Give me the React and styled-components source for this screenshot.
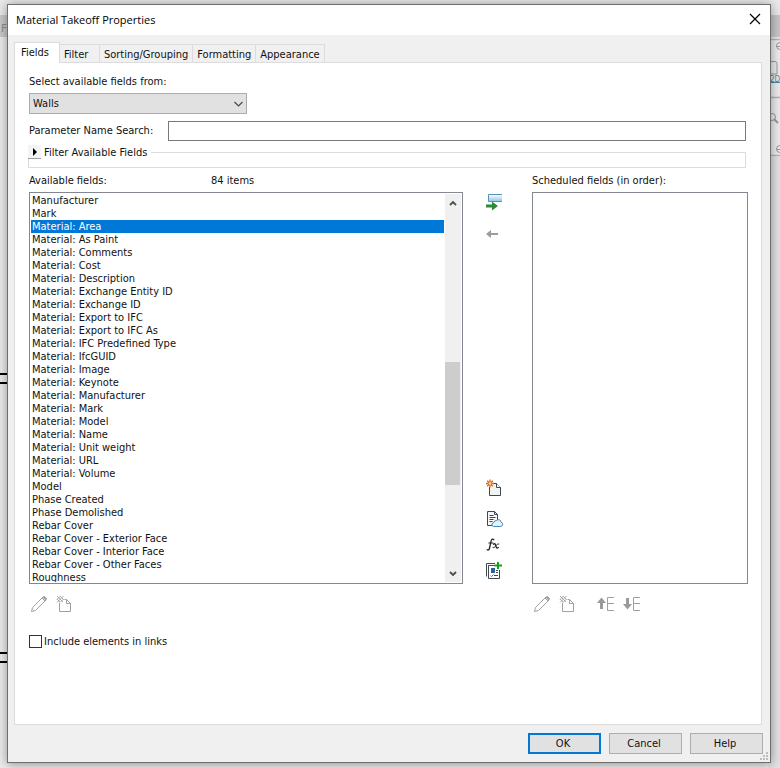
import React, { useState } from "react";
import styled, { createGlobalStyle } from "styled-components";

const GlobalStyle = createGlobalStyle`
  *, *::before, *::after { box-sizing: border-box; }
  body { margin: 0; background: #ececec; }
  body, button, input, select {
    font-family: "DejaVu Sans Condensed", Tahoma, "DejaVu Sans", sans-serif;
    font-size: 11px;
    line-height: 13px;
    color: #111;
  }
  button { padding: 0; border: 0; background: none; }
`;

const Page = styled.main`
  position: relative;
  display: flex;
  height: 100vh;
  min-height: 560px;
  padding: 4px 9px 5px 7px;
  overflow: hidden;
`;

const Backdrop = styled.svg`
  position: absolute;
  top: 0;
  height: 100%;
  ${(p) => (p.$side === "left" ? "left: 0; width: 8px;" : "right: 0; width: 12px;")}
`;

const TopShade = styled.div`
  position: absolute;
  inset: 0 0 auto 0;
  height: 15px;
  background: #e9e9e9;
`;

const Dialog = styled.section`
  position: relative;
  flex: 1;
  min-width: 0;
  display: flex;
  flex-direction: column;
  border: 1px solid #6e6e6e;
  background: #f0f0f0;
  box-shadow: 0 1px 10px rgba(0, 0, 0, 0.4);
`;

const TitleBar = styled.header`
  display: flex;
  align-items: center;
  justify-content: space-between;
  height: 30px;
  flex: none;
  padding: 0 9px 0 8px;
  background: #fff;
`;

const Title = styled.h1`
  margin: 0;
  font: 400 11px/16px "Open Sans", "Noto Sans", sans-serif;
  color: #000;
`;

const CloseButton = styled.button`
  display: grid;
  place-items: center;
  width: 12px;
  height: 22px;
  align-self: flex-start;
  padding-top: 5px;
`;

const TabStrip = styled.div`
  display: flex;
  align-items: flex-end;
  flex: none;
  padding: 7px 6px 0;
`;

const Tab = styled.button`
  position: relative;
  height: ${(p) => (p.$active ? 21 : 18)}px;
  margin-bottom: ${(p) => (p.$active ? -1 : 0)}px;
  padding: ${(p) => (p.$active ? "0 10px 1px 6px" : "1px 4px 0 4px")};
  min-width: 40px;
  text-align: left;
  border: 1px solid #dcdcdc;
  border-bottom: 0;
  border-left-width: ${(p) => (p.$active ? 1 : 0)}px;
  background: ${(p) => (p.$active ? "#fff" : "#f0f0f0")};
  z-index: ${(p) => (p.$active ? 1 : 0)};
`;

const Panel = styled.div`
  flex: 1;
  min-height: 0;
  display: flex;
  flex-direction: column;
  margin: 0 8px 0 6px;
  padding: 12px 13px 76px 14px;
  border: 1px solid #dcdcdc;
  background: #fff;
`;

const FieldLabel = styled.label`
  line-height: 14px;
`;

const SelectWrap = styled.div`
  display: grid;
  grid-template-columns: minmax(0, 218px);
  align-items: center;
  margin-top: 4px;

  select, svg { grid-area: 1 / 1; }
  svg { justify-self: end; margin-right: 4px; pointer-events: none; }
`;

const Select = styled.select`
  appearance: none;
  width: 100%;
  height: 21px;
  padding: 0 20px 0 3px;
  border: 1px solid #adadad;
  border-radius: 0;
  background: #e1e1e1;
`;

const SearchRow = styled.div`
  display: grid;
  grid-template-columns: 139px 1fr;
  align-items: center;
  margin: 7px 2px 0 0;
`;

const SearchInput = styled.input`
  width: 100%;
  height: 20px;
  padding: 0 3px;
  border: 1px solid #7a7a7a;
  background: #fff;
`;

const FilterGroup = styled.fieldset`
  flex: none;
  min-width: 0;
  height: 23px;
  margin: 4px 2px 0 -1px;
  padding: 0;
  border: 1px solid #dcdcdc;
`;

const FilterLegend = styled.legend`
  display: flex;
  margin-left: -1px;
  padding: 0 4px 0 0;
  background: #fff;
`;

const Expander = styled.button`
  display: flex;
  align-items: center;
  height: 14px;
  white-space: nowrap;
`;

const ExpanderArrow = styled.span`
  display: grid;
  place-items: center;
  width: 13px;
  height: 14px;
  margin-right: 3px;
  background: #f4f4f4;
  border-bottom: 1px solid #a0a0a0;
`;

const Columns = styled.div`
  flex: 1;
  min-height: 0;
  display: grid;
  grid-template-columns: 434fr 69px 216fr;
  grid-template-rows: 18px minmax(0, 1fr) auto;
  margin-top: 6px;
`;

const ListHeading = styled.div`
  grid-row: 1;
  grid-column: ${(p) => p.$column};
  display: grid;
  grid-template-columns: 182px auto;
  justify-content: start;
  line-height: 14px;
  white-space: nowrap;
`;

const ListFrame = styled.div`
  grid-row: 2;
  grid-column: ${(p) => p.$column};
  display: flex;
  min-width: 0;
  padding: 1px;
  border: 1px solid #828790;
  background: #fff;
`;

const Options = styled.ul`
  flex: 1;
  min-width: 0;
  margin: 0 1px 0 0;
  padding: 0;
  overflow: hidden;
  list-style: none;
`;

const Option = styled.li`
  height: 13px;
  padding-left: 1px;
  line-height: 14px;
  white-space: nowrap;
  cursor: default;
  color: ${(p) => (p.$selected ? "#fff" : "#111")};
  background: ${(p) => (p.$selected ? "#0078d7" : "transparent")};
`;

const ScrollTrack = styled.div`
  display: grid;
  grid-template-rows: 17px 151fr 122fr 80fr 17px;
  width: 16px;
  background: #f0f0f0;
`;

const ScrollButton = styled.button`
  display: grid;
  place-items: center;
`;

const ScrollThumb = styled.div`
  grid-row: 3;
  width: 15px;
  background: #cdcdcd;
`;

const ScrollEnd = styled(ScrollButton)`
  grid-row: 5;
`;

const Transfer = styled.div`
  grid-row: 2;
  grid-column: 2;
  display: flex;
  flex-direction: column;
  justify-content: space-between;
  padding: 0 0 3px 21px;
`;

const IconStack = styled.div`
  display: flex;
  flex-direction: column;
  gap: ${(p) => p.$gap}px;
`;

const IconButton = styled.button`
  display: grid;
  place-items: center;
  width: 20px;
  height: 20px;

  svg { display: block; }
`;

const ListTools = styled.div`
  grid-row: 3;
  grid-column: ${(p) => p.$column};
  display: flex;
  gap: 6px;
  padding-top: 10px;
`;

const ToolGap = styled.span`
  width: 6px;
`;

const CheckLabel = styled.label`
  display: flex;
  align-items: center;
  align-self: flex-start;
  gap: 2px;
  margin-top: 21px;
`;

const CheckBox = styled.input`
  appearance: none;
  width: 13px;
  height: 13px;
  margin: 0;
  border: 1px solid #333;
  background: #fff;

  &:checked { box-shadow: inset 0 0 0 2px #fff; background: #333; }
`;

const Footer = styled.footer`
  display: flex;
  justify-content: flex-end;
  gap: 8px;
  flex: none;
  padding: 8px 7px 8px;
`;

const PushButton = styled.button`
  width: 73px;
  height: 21px;
  padding-right: 3px;
  border: ${(p) => (p.$primary ? "2px solid #0078d7" : "1px solid #adadad")};
  background: #e1e1e1;
`;

const Grip = styled.svg`
  position: absolute;
  right: 1px;
  bottom: 1px;
`;

const TABS = ["Fields", "Filter", "Sorting/Grouping", "Formatting", "Appearance"];

const FIELDS = [
  "Manufacturer",
  "Mark",
  "Material: Area",
  "Material: As Paint",
  "Material: Comments",
  "Material: Cost",
  "Material: Description",
  "Material: Exchange Entity ID",
  "Material: Exchange ID",
  "Material: Export to IFC",
  "Material: Export to IFC As",
  "Material: IFC Predefined Type",
  "Material: IfcGUID",
  "Material: Image",
  "Material: Keynote",
  "Material: Manufacturer",
  "Material: Mark",
  "Material: Model",
  "Material: Name",
  "Material: Unit weight",
  "Material: URL",
  "Material: Volume",
  "Model",
  "Phase Created",
  "Phase Demolished",
  "Rebar Cover",
  "Rebar Cover - Exterior Face",
  "Rebar Cover - Interior Face",
  "Rebar Cover - Other Faces",
  "Roughness",
];

const CloseIcon = () => (
  <svg width="12" height="12" viewBox="0 0 12 12" fill="none" stroke="#000" strokeWidth="1.2">
    <path d="M1 1l10 10M11 1L1 11" />
  </svg>
);

const Chevron = () => (
  <svg width="9" height="6" viewBox="0 0 9 6" fill="none" stroke="#444" strokeWidth="1.1">
    <path d="M.5 1l4 4 4-4" />
  </svg>
);

const ScrollArrow = ({ down }) => (
  <svg width="8" height="6" viewBox="0 0 8 6" fill="none" stroke="#505050" strokeWidth="1.9">
    <path d={down ? "M1 1l3 3 3-3" : "M1 5l3-3 3 3"} />
  </svg>
);

const AddFieldIcon = () => (
  <svg width="18" height="18" viewBox="0 0 18 18">
    <defs>
      <linearGradient id="row" x1="0" y1="0" x2="0" y2="1">
        <stop offset="0" stopColor="#fff" />
        <stop offset="1" stopColor="#8fc6e6" />
      </linearGradient>
    </defs>
    <path d="M3.5 1.5H17v7H3.5z" fill="url(#row)" />
    <path d="M17 1.5H3.5v7H17" fill="none" stroke="#5a8fbd" />
    <path d="M1 11.500h6V8.500l6 4.500-6 4.500V14.500H1z" fill="#2c8a3b" />
  </svg>
);

const RemoveFieldIcon = () => (
  <svg width="18" height="18" viewBox="0 0 18 18">
    <path d="M1 9l5-4v3h7v2H6v3z" fill="#9c9c9c" />
  </svg>
);

const NewParameterIcon = () => (
  <svg width="18" height="18" viewBox="0 0 18 18">
    <path d="M4.500 4.500h7l4 4v8h-11z" fill="#f1f4f0" stroke="#3e4854" />
    <path d="M11.500 4.500v4h4" fill="#fff" stroke="#3e4854" />
    <circle cx="5" cy="4.500" r="3.500" fill="#fff" />
    <path d="M5 .5v8M1 4.500h8M2.200 1.700l5.600 5.600M7.800 1.700L2.200 7.300" stroke="#d9641e" strokeWidth="1.300" />
    <circle cx="5" cy="4.500" r="1.400" fill="#ffd36b" />
  </svg>
);

const CloudParameterIcon = () => (
  <svg width="20" height="20" viewBox="0 0 20 20">
    <path d="M3.500 2.500h7l3 3v11h-10z" fill="#f6f7f8" stroke="#3e4854" />
    <path d="M10.500 2.500v3h3M5.500 6.500h4M5.500 8.500h6M5.500 10.500h4M5.500 12.500h3" fill="none" stroke="#3e4854" />
    <path
      d="M9.500 17.500h7a2.200 2.200 0 0 0 .6-4.300 2.700 2.700 0 0 0-4.800-1.500 2.200 2.200 0 0 0-2.500 1.700 2.100 2.100 0 0 0-.3 4.100z"
      fill="#e2f1fb"
      stroke="#4387b8"
    />
  </svg>
);

const FormulaIcon = () => (
  <svg width="18" height="18" viewBox="0 0 18 18" fill="none" stroke="#222" strokeLinecap="round">
    <path d="M8.800 3.800c-.7-1.300-2.200-.8-2.600.9L4.400 12.500c-.4 1.600-1.500 2.100-2.200 1.200" strokeWidth="1.300" />
    <path d="M3.800 7h4.200" strokeWidth="1" />
    <path d="M8.500 8.200c1.200-.9 1.800-.3 2.200 1l.5 1.800c.4 1.300 1.200 1.400 2.100.4" strokeWidth="1.300" />
    <path d="M13.800 8c-1-.3-1.900.4-2.900 1.700S9 12 8 11.600" strokeWidth="1" />
  </svg>
);

const CombineIcon = () => (
  <svg width="20" height="20" viewBox="0 0 20 20">
    <path d="M11 2.500H2.500v13" fill="none" stroke="#3e4854" />
    <path d="M13 4.500H4.500v13h11V9" fill="#fff" stroke="#3e4854" />
    <path d="M7 7h4v5H7z" fill="#2b5f9e" />
    <path d="M12 9h2v1h-2zM12 11h2v1h-2zM10 14h4v1h-4z" fill="#3e4854" />
    <path d="M6.500 14.500l1 1 2-2" fill="none" stroke="#35902f" />
    <path d="M13 1h2v2.500h3v2h-3V8h-2V5.500h-2.500v-2H13z" fill="#12a01e" />
  </svg>
);

const PencilIcon = () => (
  <svg width="18" height="18" viewBox="0 0 18 18" fill="none" stroke="#a0a0a0">
    <path d="M1.500 16.500l1-4L13 2l1.500-.5 2 2L16 5 5.500 15.500zM12 3l3 3" />
    <path d="M13.500 2l2.500 2.500" strokeWidth="2" />
  </svg>
);

const DeleteIcon = () => (
  <svg width="18" height="18" viewBox="0 0 18 18" fill="none" stroke="#a0a0a0">
    <path d="M3.500 8v8.500h11v-8l-4-4v4h4M8.500 4.500h2" />
    <path d="M1 1l6 6M4 1l3.500 3.500M1 4l3 3M7.500 1L1 7.500M4.500 1L1 4.500M7.500 4L4 7.500" strokeWidth=".9" />
  </svg>
);

const MoveIcon = ({ down }) => (
  <svg width="18" height="18" viewBox="0 0 18 18">
    <path
      d={down ? "M3 3h3v6h3l-4.500 5.500L0 9h3z" : "M3 14h3V8h3L4.500 2.500 0 8h3z"}
      fill="#9a9a9a"
    />
    <path d="M17 2.500h-6.500v13H17M10.500 8.500H17" fill="none" stroke="#a0a0a0" />
  </svg>
);

function LeftBackdrop() {
  return (
    <Backdrop $side="left" aria-hidden="true">
      <rect y="15" width="8" height="22" fill="#c9c9c9" />
      <text x="1" y="32" fontSize="11" fill="#8c8c8c">F</text>
      <path d="M0 374h8M0 383h8M0 653h8M0 662h8" stroke="#000" strokeWidth="2" />
    </Backdrop>
  );
}

function RightBackdrop() {
  return (
    <Backdrop $side="right" aria-hidden="true">
      <rect y="15" width="12" height="22" fill="#c6c6c6" />
      <path d="M0 39.500h12M0 97.500h12M0 155.500h12" stroke="#b5b5b5" strokeWidth="1.500" />
      <rect y="157" width="12" height="640" fill="#e2e2e2" />
      <g fill="none" stroke="#999">
        <circle cx="12" cy="46" r="3.500" />
        <path d="M2 61.500h5q2 0 2 2V74H2" />
        <circle cx="4" cy="117" r="3.500" />
        <path d="M6 119l4 4" strokeWidth="2" />
        <circle cx="12" cy="149" r="3.500" />
        <path d="M9 46.500h3M9 149.500h3" />
      </g>
      <path d="M1 90h2M1 108h2M1 132h2" stroke="#666" strokeWidth="2" />
      <path d="M2 82.500h10" stroke="#4b87a8" />
      <text x="2" y="82" fontSize="8" fill="#4b87a8">2D</text>
    </Backdrop>
  );
}

export default function App() {
  const [tab, setTab] = useState("Fields");
  const [selected, setSelected] = useState("Material: Area");

  return (
    <>
      <GlobalStyle />
      <Page>
        <TopShade />
        <LeftBackdrop />
        <RightBackdrop />
        <Dialog role="dialog" aria-labelledby="dialog-title">
          <TitleBar>
            <Title id="dialog-title">Material Takeoff Properties</Title>
            <CloseButton aria-label="Close"><CloseIcon /></CloseButton>
          </TitleBar>

          <TabStrip role="tablist">
            {TABS.map((name) => (
              <Tab
                key={name}
                role="tab"
                aria-selected={tab === name}
                $active={tab === name}
                onClick={() => setTab(name)}
              >
                {name}
              </Tab>
            ))}
          </TabStrip>

          <Panel role="tabpanel">
            <FieldLabel htmlFor="category">Select available fields from:</FieldLabel>
            <SelectWrap>
              <Select id="category" defaultValue="Walls">
                <option>Walls</option>
              </Select>
              <Chevron />
            </SelectWrap>

            <SearchRow>
              <FieldLabel htmlFor="search">Parameter Name Search:</FieldLabel>
              <SearchInput id="search" type="text" />
            </SearchRow>

            <FilterGroup>
              <FilterLegend>
                <Expander aria-expanded="false">
                  <ExpanderArrow>
                    <svg width="4" height="8" viewBox="0 0 4 8"><path d="M0 0l4 4-4 4z" /></svg>
                  </ExpanderArrow>
                  Filter Available Fields
                </Expander>
              </FilterLegend>
            </FilterGroup>

            <Columns>
              <ListHeading $column={1}>
                <span id="available">Available fields:</span>
                <span>84 items</span>
              </ListHeading>
              <ListHeading $column={3}>
                <span id="scheduled">Scheduled fields (in order):</span>
              </ListHeading>

              <ListFrame $column={1}>
                <Options role="listbox" aria-labelledby="available">
                  {FIELDS.map((name) => (
                    <Option
                      key={name}
                      role="option"
                      aria-selected={selected === name}
                      $selected={selected === name}
                      onClick={() => setSelected(name)}
                    >
                      {name}
                    </Option>
                  ))}
                </Options>
                <ScrollTrack>
                  <ScrollButton aria-label="Scroll up"><ScrollArrow /></ScrollButton>
                  <ScrollThumb />
                  <ScrollEnd aria-label="Scroll down"><ScrollArrow down /></ScrollEnd>
                </ScrollTrack>
              </ListFrame>

              <Transfer>
                <IconStack $gap={12}>
                  <IconButton aria-label="Add field"><AddFieldIcon /></IconButton>
                  <IconButton aria-label="Remove field"><RemoveFieldIcon /></IconButton>
                </IconStack>
                <IconStack $gap={11}>
                  <IconButton aria-label="New parameter"><NewParameterIcon /></IconButton>
                  <IconStack $gap={6}>
                    <IconButton aria-label="Add project parameter"><CloudParameterIcon /></IconButton>
                    <IconButton aria-label="Add calculated parameter"><FormulaIcon /></IconButton>
                    <IconButton aria-label="Combine parameters"><CombineIcon /></IconButton>
                  </IconStack>
                </IconStack>
              </Transfer>

              <ListFrame $column={3}>
                <Options role="listbox" aria-labelledby="scheduled" />
              </ListFrame>

              <ListTools $column={1}>
                <IconButton aria-label="Edit parameter"><PencilIcon /></IconButton>
                <IconButton aria-label="Delete parameter"><DeleteIcon /></IconButton>
              </ListTools>
              <ListTools $column={3}>
                <IconButton aria-label="Edit scheduled field"><PencilIcon /></IconButton>
                <IconButton aria-label="Delete scheduled field"><DeleteIcon /></IconButton>
                <ToolGap />
                <IconButton aria-label="Move up"><MoveIcon /></IconButton>
                <IconButton aria-label="Move down"><MoveIcon down /></IconButton>
              </ListTools>
            </Columns>

            <CheckLabel>
              <CheckBox type="checkbox" />
              Include elements in links
            </CheckLabel>
          </Panel>

          <Footer>
            <PushButton $primary>OK</PushButton>
            <PushButton>Cancel</PushButton>
            <PushButton>Help</PushButton>
          </Footer>
          <Grip width="9" height="9" viewBox="0 0 9 9" fill="#bdbdbd" aria-hidden="true">
            <path d="M6 0h2v2H6zM3 3h2v2H3zM6 3h2v2H6zM0 6h2v2H0zM3 6h2v2H3zM6 6h2v2H6z" />
          </Grip>
        </Dialog>
      </Page>
    </>
  );
}
